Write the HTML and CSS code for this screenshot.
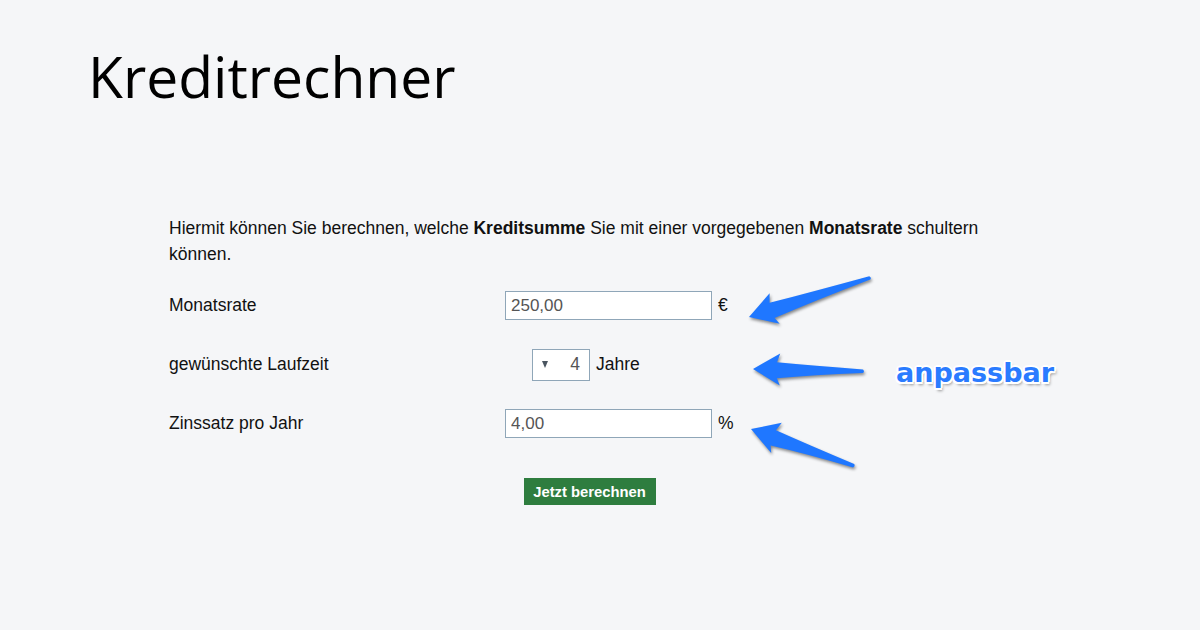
FILE: index.html
```html
<!DOCTYPE html>
<html lang="de">
<head>
    <meta charset="UTF-8">
    <meta name="viewport" content="width=device-width, initial-scale=1.0">
    <title>Kreditrechner</title>
    <link rel="stylesheet" href="styles.css">
</head>
<body>
    <div class="page">
        <h1 class="title">Kreditrechner</h1>

        <div class="calc">
            <p class="intro">Hiermit können Sie berechnen, welche <b>Kreditsumme</b> Sie mit einer vorgegebenen <b>Monatsrate</b> schultern können.</p>

            <div class="form-grid">
                <div class="label">Monatsrate</div>
                <div class="field">
                    <input type="text" class="input-field" value="250,00">
                    <span class="unit">€</span>
                </div>

                <div class="label">gewünschte Laufzeit</div>
                <div class="field field-years">
                    <div class="year-select">
                        <span class="caret"></span>
                        <span class="year-value">4</span>
                    </div>
                    <span class="unit">Jahre</span>
                </div>

                <div class="label">Zinssatz pro Jahr</div>
                <div class="field">
                    <input type="text" class="input-field" value="4,00">
                    <span class="unit">%</span>
                </div>
            </div>

            <div class="btn-row">
                <button class="calc-btn">Jetzt berechnen</button>
            </div>
        </div>

        <!-- Hinweis-Pfeile -->
        <svg class="arrows" width="1200" height="630" viewBox="0 0 1200 630">
            <g fill="#1f77ff">
                <path transform="translate(749,317) rotate(-18.3)" d="M0,0 L27,-16 L24,-7 Q70,-4 127,-1 Q129,1 127,2.5 Q70,5 24,9 L27,16 Z"/>
                <path transform="translate(753,369) rotate(0.8)" d="M0,0 L27,-16 L24,-7 Q60,-4 110,-1 Q112,1 110,2.5 Q60,5 24,9 L27,16 Z"/>
                <path transform="translate(751,429) rotate(19.3)" d="M0,0 L27,-16 L24,-7 Q60,-4 109,-1 Q111,1 109,2.5 Q60,5 24,9 L27,16 Z"/>
            </g>
        </svg>
        <div class="note">anpassbar</div>
    </div>
</body>
</html>
```

FILE: styles.css
```css
body {
    margin: 0;
    background-color: #f5f6f8;
    font-family: "Liberation Sans", Arial, sans-serif;
    color: #111;
}
.page {
    position: relative;
    width: 1200px;
    height: 630px;
    overflow: hidden;
}
.title {
    margin: 0;
    padding: 42px 0 0 88px;
    font-family: "Open Sans", sans-serif;
    font-weight: 400;
    font-size: 57px;
    line-height: 68px;
    color: #000;
}

/* Rechner */
.calc {
    width: 841px;
    margin: 105px 0 0 169px;
}
.intro {
    margin: 0;
    font-size: 17.5px;
    line-height: 26px;
}
.form-grid {
    display: grid;
    grid-template-columns: 336px 1fr;
    grid-auto-rows: 59px;
    align-items: center;
    margin-top: 9px;
}
.label {
    font-size: 17.5px;
}
.field {
    display: flex;
    align-items: center;
    gap: 6px;
}
.field-years {
    padding-left: 27px;
}
.input-field {
    width: 207px;
    height: 29px;
    box-sizing: border-box;
    padding: 0 5px;
    border: 1px solid #8fa6b8;
    background: #fff;
    font-family: "Liberation Sans", Arial, sans-serif;
    font-size: 17px;
    color: #555;
    outline: none;
}
.unit {
    font-size: 17.5px;
}
.year-select {
    width: 58px;
    height: 32px;
    box-sizing: border-box;
    border: 1px solid #8fa6b8;
    background: #fff;
    display: flex;
    align-items: center;
    justify-content: space-between;
    padding: 0 9px 0 9px;
}
.caret {
    width: 0;
    height: 0;
    border-left: 3.5px solid transparent;
    border-right: 3.5px solid transparent;
    border-top: 7px solid #4a5560;
}
.year-value {
    font-size: 17.5px;
    color: #555;
}
.btn-row {
    display: flex;
    justify-content: center;
    margin-top: 25px;
}
.calc-btn {
    height: 27px;
    width: 132px;
    border: none;
    background: #2e7d3f;
    color: #fff;
    font-family: "Liberation Sans", Arial, sans-serif;
    font-weight: bold;
    font-size: 14.8px;
    cursor: pointer;
}

/* Annotation */
.arrows {
    position: absolute;
    top: 0;
    left: 0;
    pointer-events: none;
    filter: drop-shadow(1px 2px 1.5px rgba(0,0,0,0.45));
}
.note {
    position: absolute;
    left: 896px;
    top: 356px;
    font-family: "DejaVu Sans", sans-serif;
    font-weight: bold;
    font-size: 27px;
    line-height: 34px;
    color: #2a7bff;
    text-shadow:
        -2px 0 0 #fff, 2px 0 0 #fff, 0 -2px 0 #fff, 0 2px 0 #fff,
        -1.5px -1.5px 0 #fff, 1.5px -1.5px 0 #fff, -1.5px 1.5px 0 #fff, 1.5px 1.5px 0 #fff,
        2px 3px 3px rgba(0,0,0,0.4);
}
```
